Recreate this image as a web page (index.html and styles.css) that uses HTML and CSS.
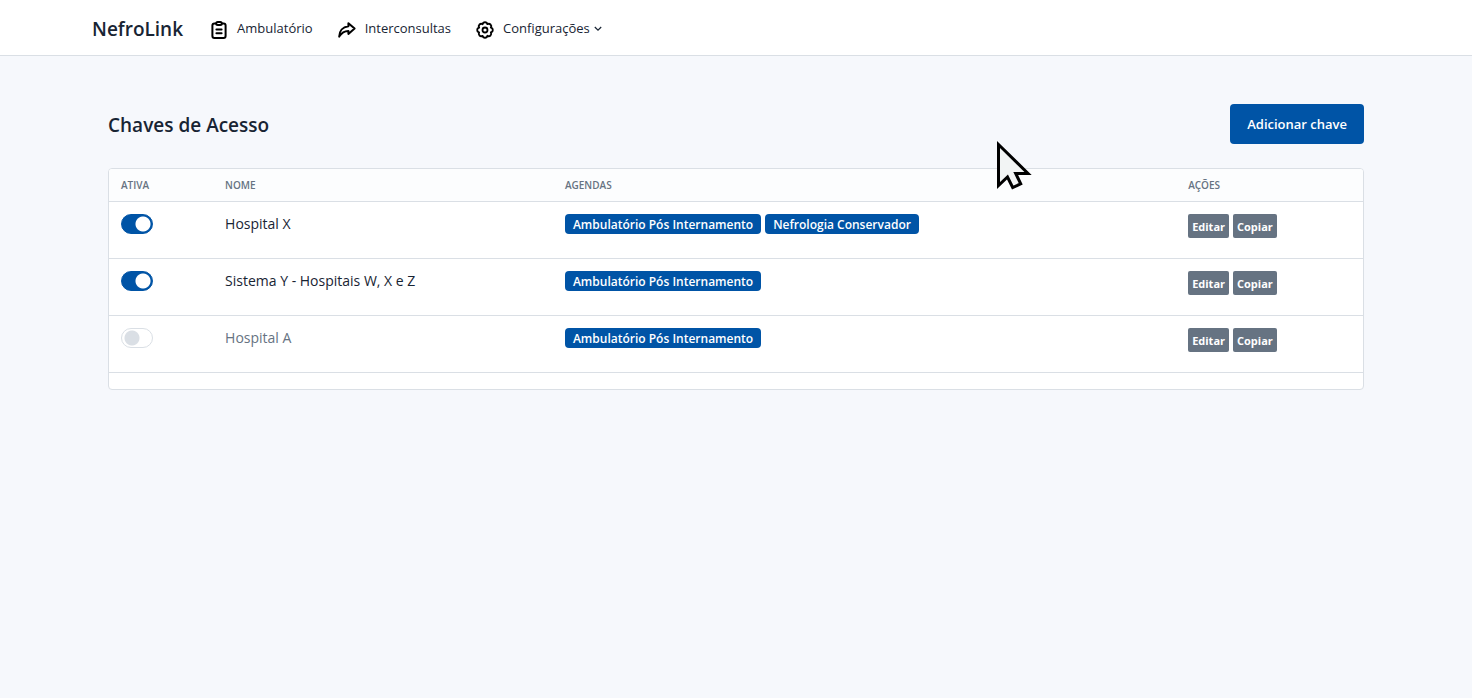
FILE: index.html
```html
<!DOCTYPE html>
<html lang="pt">
<head>
<meta charset="utf-8">
<meta name="viewport" content="width=device-width, initial-scale=1">
<title>NefroLink</title>
<link rel="stylesheet" href="styles.css">
</head>
<body>
<header class="navbar">
  <div class="container navbar-inner">
    <a class="brand" href="#">NefroLink</a>
    <nav class="nav">
      <a class="nav-link" href="#">
        <svg class="icon" viewBox="0 0 20 20" aria-hidden="true"><rect x="3.4" y="3.4" width="13.2" height="14.6" rx="2"/><rect x="7.2" y="1.9" width="5.6" height="3.2" rx="1.5" fill="#fff"/><path d="M7.400 9.400h5.200M7.400 13.200h5.200"/></svg>
        <span>Ambulatório</span>
      </a>
      <a class="nav-link" href="#">
        <svg class="icon" viewBox="0 0 20 20" aria-hidden="true"><path d="M11.4 3.200 17.600 8.600l-6.200 5.300v-3C7 11 4.400 13 2.200 16.600c0-5.500 3.400-9.700 9.200-10.400z"/></svg>
        <span>Interconsultas</span>
      </a>
      <a class="nav-link" href="#">
        <svg class="icon icon-gear" viewBox="0 0 20 20" aria-hidden="true"><path d="M7.600 4.200A2.450 2.450 0 0 1 12.400 4.200A2.450 2.450 0 0 1 15.800 7.600A2.450 2.450 0 0 1 15.800 12.400A2.450 2.450 0 0 1 12.400 15.800A2.450 2.450 0 0 1 7.600 15.800A2.450 2.450 0 0 1 4.200 12.400A2.450 2.450 0 0 1 4.200 7.600A2.450 2.450 0 0 1 7.600 4.200z"/><circle cx="10" cy="10" r="2.5"/></svg>
        <span>Configurações</span>
        <svg class="chevron" viewBox="0 0 8 8" aria-hidden="true"><path d="M.8 2 4 5.200 7.200 2"/></svg>
      </a>
    </nav>
  </div>
</header>
<main class="container page">
  <div class="page-header">
    <h1 class="page-title">Chaves de Acesso</h1>
    <button class="btn btn-primary" type="button">Adicionar chave</button>
  </div>
  <div class="card">
    <table class="table">
      <thead>
        <tr><th class="col-active">Ativa</th><th class="col-name">Nome</th><th class="col-agendas">Agendas</th><th class="col-actions">Ações</th></tr>
      </thead>
      <tbody>
        <tr>
          <td><input class="switch" type="checkbox" aria-labelledby="key-1" checked></td>
          <td id="key-1">Hospital X</td>
          <td><div class="group"><span class="badge">Ambulatório Pós Internamento</span><span class="badge">Nefrologia Conservador</span></div></td>
          <td><div class="group"><button class="btn btn-small" type="button">Editar</button><button class="btn btn-small" type="button">Copiar</button></div></td>
        </tr>
        <tr>
          <td><input class="switch" type="checkbox" aria-labelledby="key-2" checked></td>
          <td id="key-2">Sistema Y - Hospitais W, X e Z</td>
          <td><div class="group"><span class="badge">Ambulatório Pós Internamento</span></div></td>
          <td><div class="group"><button class="btn btn-small" type="button">Editar</button><button class="btn btn-small" type="button">Copiar</button></div></td>
        </tr>
        <tr>
          <td><input class="switch" type="checkbox" aria-labelledby="key-3"></td>
          <td id="key-3" class="muted">Hospital A</td>
          <td><div class="group"><span class="badge">Ambulatório Pós Internamento</span></div></td>
          <td><div class="group"><button class="btn btn-small" type="button">Editar</button><button class="btn btn-small" type="button">Copiar</button></div></td>
        </tr>
      </tbody>
    </table>
  </div>
</main>
<svg class="pointer" viewBox="0 0 36 50" aria-hidden="true"><path d="M2.500 4.500v41l9-8.500 5.200 10.500 8-3.700-5-10.300H32z"/></svg>
</body>
</html>
```
FILE: styles.css
```css
* { box-sizing: border-box; }

body {
  margin: 0;
  background: #f6f8fc;
  color: #182433;
  font: 14px/20px "Open Sans", "Noto Sans", sans-serif;
}

.container {
  width: 100%;
  max-width: 1320px;
  margin: 0 auto;
  padding: 0 16px;
}

.navbar {
  background: #fff;
  border-bottom: 1px solid #dadfe5;
}

.navbar-inner {
  display: flex;
  align-items: center;
  min-height: 55px;
}

.brand {
  color: inherit;
  font-size: 19px;
  line-height: 24px;
  font-weight: 600;
  text-decoration: none;
  margin: 2px 26px 0 0;
}

.nav {
  display: flex;
  gap: 24px;
}

.nav-link {
  display: flex;
  align-items: center;
  color: inherit;
  font-size: 13px;
  text-decoration: none;
}

.icon {
  width: 20px;
  height: 20px;
  margin: 4px 8px 0 0;
  fill: none;
  stroke: #000;
  stroke-width: 2;
  stroke-linecap: round;
  stroke-linejoin: round;
}

.icon-gear { stroke-width: 1.8; }

.chevron {
  width: 8px;
  height: 8px;
  margin: 2px 0 0 4px;
  fill: none;
  stroke: #182433;
  stroke-width: 1.2;
}

.page { padding: 48px 32px; }

.page-header {
  display: flex;
  align-items: center;
  justify-content: space-between;
  margin-bottom: 24px;
}

.page-title {
  margin: 2px 0 0;
  font-size: 19px;
  line-height: 28px;
  font-weight: 600;
}

.btn {
  border: 0;
  color: #fff;
  font-family: inherit;
  white-space: nowrap;
}

.btn-primary {
  padding: 10px 17px;
  border-radius: 4px;
  background: #0054a6;
  font-size: 13px;
  line-height: 20px;
  font-weight: 600;
}

.btn-small {
  padding: 2px 4px 0;
  border-radius: 2px;
  background: #667382;
  font-size: 11px;
  line-height: 22px;
  font-weight: 700;
}

.card {
  padding-bottom: 16px;
  border: 1px solid #dadfe5;
  border-radius: 4px;
  background: #fff;
  overflow: hidden;
}

.table {
  width: 100%;
  border-collapse: separate;
  border-spacing: 0;
  table-layout: fixed;
}

.col-active { width: 8.3%; }
.col-name { width: 27.1%; }
.col-agendas { width: 49.7%; }

.table th {
  padding: 8px 12px;
  border-bottom: 1px solid #dadfe5;
  background: #fcfdfe;
  color: #667382;
  font-size: 10px;
  line-height: 16px;
  font-weight: 600;
  text-align: left;
  text-transform: uppercase;
}

.table td {
  height: 57px;
  padding: 12px;
  border-bottom: 1px solid #dadfe5;
  vertical-align: top;
}

.table .muted { color: #667382; }

.switch {
  appearance: none;
  display: block;
  width: 32px;
  height: 20px;
  margin: 0;
  border: 1px solid #dadfe5;
  border-radius: 10px;
  background: radial-gradient(circle at 10px 9px, #dadfe5 7px, #fff 8px);
}

.switch:checked {
  border-color: #0054a6;
  background: radial-gradient(circle at 21px 9px, #fff 7px, #0054a6 8px);
}

.group {
  display: flex;
  align-items: flex-start;
  gap: 4px;
}

.badge {
  padding: 1px 8px 0;
  border-radius: 4px;
  background: #0054a6;
  color: #fff;
  font-size: 12px;
  line-height: 19px;
  font-weight: 600;
  white-space: nowrap;
}

.pointer {
  position: absolute;
  left: 996px;
  top: 140px;
  width: 36px;
  height: 50px;
  fill: #f2f4f4;
  stroke: #000;
  stroke-width: 3;
  pointer-events: none;
}
```
